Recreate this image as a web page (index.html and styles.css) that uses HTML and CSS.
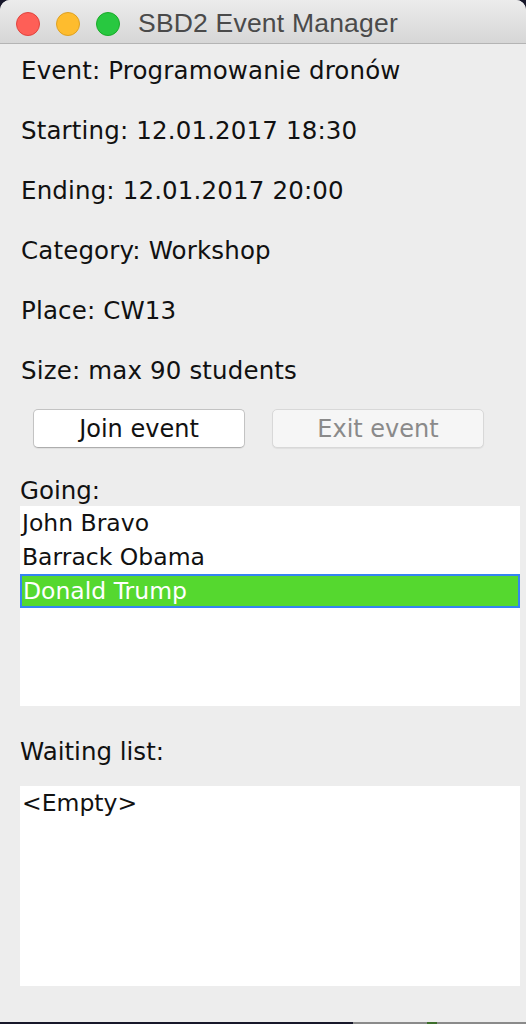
FILE: index.html
```html
<!DOCTYPE html>
<html lang="pl">
<head>
<meta charset="utf-8">
<title>SBD2 Event Manager</title>
<link rel="stylesheet" href="styles.css">
</head>
<body>
<div class="window">
  <header class="titlebar">
    <div class="lights">
      <span class="light red"></span>
      <span class="light yellow"></span>
      <span class="light green"></span>
    </div>
    <div class="title">SBD2 Event Manager</div>
  </header>
  <main class="content">
    <div class="info">
      <div class="row">Event: Programowanie dronów</div>
      <div class="row">Starting: 12.01.2017 18:30</div>
      <div class="row">Ending: 12.01.2017 20:00</div>
      <div class="row">Category: Workshop</div>
      <div class="row">Place: CW13</div>
      <div class="row">Size: max 90 students</div>
    </div>
    <div class="buttons">
      <button class="btn">Join event</button>
      <button class="btn disabled" disabled>Exit event</button>
    </div>
    <div class="label going-label">Going:</div>
    <ul class="list">
      <li class="item">John Bravo</li>
      <li class="item">Barrack Obama</li>
      <li class="item selected">Donald Trump</li>
    </ul>
    <div class="label waiting-label">Waiting list:</div>
    <ul class="list">
      <li class="item">&lt;Empty&gt;</li>
    </ul>
  </main>
</div>
<div class="dockbar"><span class="dock-seg"></span><span class="dock-dot"></span><span class="dock-seg short"></span><span class="dock-seg"></span></div>
</body>
</html>
```

FILE: styles.css
```css
html, body {
  margin: 0;
  padding: 0;
  background: #17172a;
}
body {
  width: 526px;
  height: 1024px;
  overflow: hidden;
  font-family: "DejaVu Sans", "Noto Sans", sans-serif;
  color: #111;
}
.window {
  width: 526px;
  height: 1022px;
  background: #ededed;
  border-radius: 10px 10px 0 0;
  overflow: hidden;
  display: flex;
  flex-direction: column;
}
.titlebar {
  height: 44px;
  flex: 0 0 44px;
  box-sizing: border-box;
  padding-top: 4px;
  background: linear-gradient(#ececec, #d6d6d6);
  border-bottom: 1px solid #b4b4b4;
  display: flex;
  align-items: center;
}
.lights {
  display: flex;
  gap: 16px;
  padding-left: 16px;
}
.light {
  width: 24px;
  height: 24px;
  border-radius: 50%;
  box-sizing: border-box;
}
.red { background: #fe5f57; border: 1px solid #e0443e; }
.yellow { background: #febc2e; border: 1px solid #dea123; }
.green { background: #28c840; border: 1px solid #1aab29; }
.title {
  margin-left: 18px;
  font-family: "Liberation Sans", Arial, sans-serif;
  font-size: 26.5px;
  color: #4a4a4a;
  letter-spacing: 0.2px;
}
.content {
  flex: 1;
  display: flex;
  flex-direction: column;
  padding: 0 6px 0 20px;
}
.info {
  padding-left: 1px;
  margin-top: -3px;
}
.row {
  height: 60px;
  line-height: 60px;
  font-size: 24.5px;
  letter-spacing: 0.15px;
  white-space: nowrap;
}
.buttons {
  display: flex;
  gap: 27px;
  padding-left: 13px;
  margin-top: 8px;
}
.btn {
  width: 212px;
  height: 39px;
  box-sizing: border-box;
  background: #ffffff;
  border: 1px solid #c3c3c3;
  border-bottom-color: #adadad;
  border-radius: 5px;
  font-family: "DejaVu Sans", sans-serif;
  font-size: 24px;
  color: #111;
  padding: 0;
  box-shadow: 0 1px 1px rgba(0,0,0,0.06);
}
.btn.disabled {
  background: #f6f6f6;
  color: #8a8a8a;
  border-color: #d8d8d8;
}
.label {
  font-size: 24.5px;
  height: 30px;
  line-height: 30px;
  white-space: nowrap;
}
.going-label { margin-top: 28px; }
.waiting-label { margin-top: 31px; margin-bottom: 19px; }
.list {
  list-style: none;
  margin: 0;
  padding: 0;
  height: 200px;
  background: #ffffff;
}
.item {
  height: 34px;
  line-height: 34px;
  padding-left: 2px;
  font-size: 23.5px;
  white-space: nowrap;
  box-sizing: border-box;
}
.item.selected {
  background: #55d82f;
  color: #ffffff;
  border: 2px solid #3584f2;
  line-height: 30px;
  padding-left: 1px;
}
.dockbar {
  height: 2px;
  margin-left: 353px;
  display: flex;
}
.dock-seg {
  flex: 1;
  background: #8a8a8a;
}
.dock-seg.short { flex: 0 0 16px; }
.dock-dot {
  flex: 0 0 10px;
  background: #3c6e2a;
}
```
